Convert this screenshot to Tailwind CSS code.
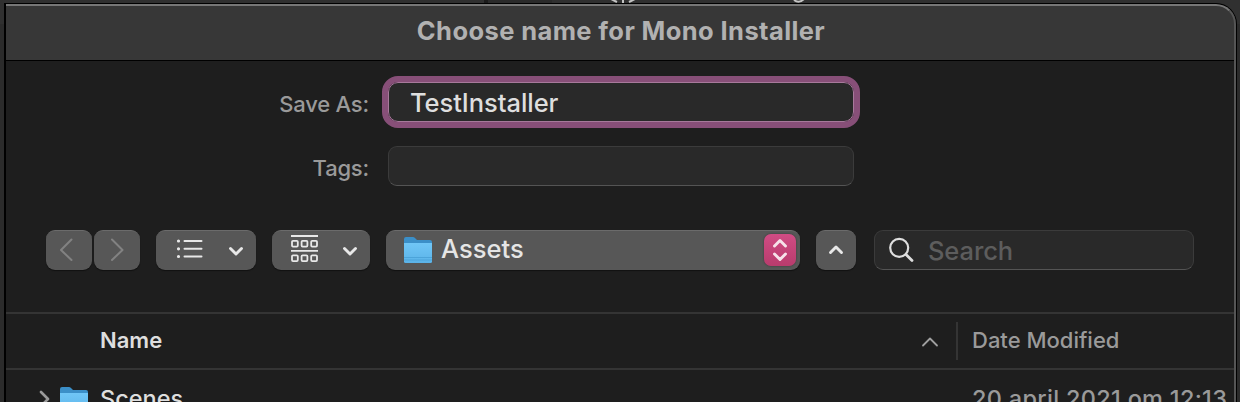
<!DOCTYPE html>
<html lang="en">
<head>
<meta charset="utf-8">
<title>Choose name for Mono Installer</title>
<script src="https://cdn.jsdelivr.net/npm/@tailwindcss/browser@4"></script>
</head>
<body class="relative h-[402px] w-[1240px] overflow-hidden bg-[#2b2b2b] pt-[3px] pl-1 font-['Inter',sans-serif]">
<!-- strip of the window behind the dialog -->
<div class="absolute inset-x-0 top-0 flex h-[24px] overflow-hidden bg-[#303030]">
  <div class="w-[484px]"></div><div class="w-1 bg-[#1b1b1b]"></div><div class="w-16 bg-[#2a2a2a]"></div>
  <svg class="absolute top-0 left-[608px]" width="30" height="4" fill="none" stroke="#c4c4c4" stroke-width="2"><path d="M3-1L9 2M27-1L21 2M15-1V4"/></svg>
  <svg class="absolute top-0 left-[792px]" width="16" height="4" fill="none" stroke="#c4c4c4" stroke-width="2"><path d="M2 0Q7 4 12-1"/></svg>
</div>
<main class="relative h-[399px] w-[1233px] overflow-hidden rounded-tr-[21px] border-t border-r border-l-2 border-black bg-[#1e1e1e]">
  <header class="flex h-[57px] items-center justify-center border-b border-black bg-[#373737] pb-[3px] text-[#b1b1b1]">
    <h1 class="text-[25.5px] leading-none font-bold tracking-[0.4px] whitespace-nowrap">Choose name for Mono Installer</h1>
  </header>
  <section class="flex h-[169px] flex-col pt-[21px] text-[#9a9a9a]">
    <div class="flex h-10 items-center">
      <label class="w-[363px] pt-[4px] text-right text-[22px] leading-none font-[450] tracking-[-0.2px]">Save As:</label>
      <div class="ml-[19px] flex h-10 w-[466px] items-center rounded-[10px] border border-[#a7799b] bg-[#292929] pt-px pl-[21px] text-[25.5px] leading-none font-[450] tracking-[-0.05px] text-[#dedede] outline-[6px] outline-[#874f78]">TestInstaller</div>
    </div>
    <div class="mt-6 flex h-10 items-center">
      <label class="w-[363px] pt-[4px] text-right text-[22px] leading-none font-[450] tracking-[-0.2px]">Tags:</label>
      <div class="ml-[19px] h-10 w-[466px] rounded-[9px] border border-[#3b3b3b] border-b-[#545454] bg-[#292929]"></div>
    </div>
  </section>
  <nav class="flex h-[82px] items-start pl-10">
    <div class="flex h-10 w-[46px] items-center justify-center rounded-[9px] border-t border-[#6b6b6b] bg-[#575757] shadow-[0_1px_1px_#111]">
      <svg width="46" height="40" fill="none" stroke="#828282" stroke-width="2" stroke-linecap="round" stroke-linejoin="round"><path d="M25.500 8.500L15 19L25.500 29"/></svg>
    </div>
    <div class="ml-0.5 flex h-10 w-[46px] items-center justify-center rounded-[9px] border-t border-[#6b6b6b] bg-[#575757] shadow-[0_1px_1px_#111]">
      <svg width="46" height="40" fill="none" stroke="#828282" stroke-width="2" stroke-linecap="round" stroke-linejoin="round"><path d="M18 8.500L28.500 19L18 29"/></svg>
    </div>
    <div class="ml-4 h-10 w-[100px] rounded-[9px] border-t border-[#6b6b6b] bg-[#575757] shadow-[0_1px_1px_#111]">
      <svg width="100" height="39" fill="none" stroke="#e8e8e8" stroke-width="2" stroke-linecap="round"><path d="M28.500 10H45.500M28.500 17.800H45.500M28.500 25.500H45.500"/><path d="M22.500 10h.01M22.500 17.800h.01M22.500 25.500h.01" stroke-width="3.200"/><path d="M74.500 17.500L80 23L85.500 17.500" stroke-width="2.900" stroke-linejoin="round"/></svg>
    </div>
    <div class="ml-4 h-10 w-[98px] rounded-[9px] border-t border-[#6b6b6b] bg-[#575757] shadow-[0_1px_1px_#111]">
      <svg width="98" height="39" fill="none" stroke="#e8e8e8" stroke-width="1.800"><path d="M19 5H46M19 19.800H46"/><g><rect x="20" y="9.800" width="5.800" height="5.800" rx="1"/><rect x="29.600" y="9.800" width="5.800" height="5.800" rx="1"/><rect x="39.200" y="9.800" width="5.800" height="5.800" rx="1"/><rect x="20" y="24.300" width="5.800" height="5.800" rx="1"/><rect x="29.600" y="24.300" width="5.800" height="5.800" rx="1"/><rect x="39.200" y="24.300" width="5.800" height="5.800" rx="1"/></g><path d="M72.500 17.500L78 23L83.500 17.500" stroke-width="2.900" stroke-linecap="round" stroke-linejoin="round"/></svg>
    </div>
    <div class="ml-4 flex h-10 w-[414px] items-center rounded-[9px] border-t border-[#6b6b6b] bg-[#575757] pb-0.5 pl-[17px] shadow-[0_1px_1px_#111]">
      <svg class="shrink-0" width="30" height="28">
        <defs><linearGradient id="f" x2="0" y2="1"><stop stop-color="#70c6f7"/><stop offset="1" stop-color="#5bb3e8"/></linearGradient></defs>
        <path d="M1 3Q1 1 3 1H10Q11 1 12 2L14 4H27Q29 4 29 6V12H1Z" fill="#3b8fc8"/><path d="M1 7H29V25.500Q29 27 27.500 27H2.500Q1 27 1 25.500Z" fill="url(#f)"/><path d="M1 21.500H29M1 24H29" stroke="#4ca4da"/>
      </svg>
      <span class="ml-[8px] pb-0.5 text-[25.500px] leading-none font-[450] text-[#e5e5e5]">Assets</span>
      <div class="mr-1 ml-auto h-8 w-8 rounded-[7px] bg-linear-to-b from-[#d04c84] to-[#b83c6d] shadow-[0_0_2px_#333]">
        <svg width="32" height="32" fill="none" stroke="#f6e2ea" stroke-width="2.900" stroke-linecap="round" stroke-linejoin="round"><path d="M10.500 12L16 6.500L21.500 12M10.500 20L16 25.500L21.500 20"/></svg>
      </div>
    </div>
    <div class="ml-4 h-10 w-10 rounded-[9px] border-t border-[#6b6b6b] bg-[#575757] shadow-[0_1px_1px_#111]">
      <svg width="40" height="39" fill="none" stroke="#e8e8e8" stroke-width="2.900" stroke-linecap="round" stroke-linejoin="round"><path d="M14.500 21.500L20 16L25.500 21.500"/></svg>
    </div>
    <div class="ml-[18px] flex h-10 w-[320px] items-center rounded-[9px] border border-[#3b3b3b] border-b-[#545454] bg-[#292929] pl-[13px]">
      <svg width="28" height="28" fill="none" stroke="#dedede" stroke-width="2.200" stroke-linecap="round"><circle cx="11.200" cy="11.800" r="9"/><path d="M18 18.500L24 24.500" stroke-width="2.800"/></svg>
      <span class="ml-[12px] pt-px text-[25.500px] leading-none font-[450] tracking-[-0.1px] text-[#5d5d5d]">Search</span>
    </div>
  </nav>
  <div class="flex h-[58px] items-center border-y-2 border-[#343434] pl-[94px] text-[22px] leading-none">
    <span class="pb-0.5 font-semibold text-[#dedede]">Name</span>
    <svg class="mt-px ml-auto" width="18" height="12" fill="none" stroke="#a0a0a0" stroke-width="1.800" stroke-linecap="round" stroke-linejoin="round"><path d="M2 9.500L9 2.500L16 9.500"/></svg>
    <div class="ml-[17px] h-[38px] w-0.5 bg-[#343434]"></div>
    <span class="ml-[14px] w-[264px] pb-0.5 font-[450] text-[#9a9a9a]">Date Modified</span>
  </div>
  <div class="flex h-[32px] items-start overflow-hidden pt-[16px] pl-[32px] text-[23.5px] leading-none font-[450]">
    <svg class="mt-[4px]" width="14" height="22" fill="none" stroke="#9a9a9a" stroke-width="2.600" stroke-linecap="round" stroke-linejoin="round"><path d="M3 2L10 9L3 16"/></svg>
    <svg class="ml-[7px]" width="30" height="28"><path d="M1 3Q1 1 3 1H10Q11 1 12 2L14 4H27Q29 4 29 6V12H1Z" fill="#3b8fc8"/><path d="M1 7H29V27H1Z" fill="url(#f)"/></svg>
    <span class="ml-[11px] pt-px text-[#dedede]">Scenes</span>
    <span class="ml-auto w-[264px] pt-px tracking-[0.3px] whitespace-nowrap text-[#9a9a9a]">20 april 2021 om 12:13</span>
  </div>
  <!-- highlight along the inside edge of the dialog -->
  <div class="pointer-events-none absolute inset-0 rounded-tr-[20px] border-t-2 border-r-2 border-t-[#777] border-r-[#555]"></div>
</main>
</body>
</html>
